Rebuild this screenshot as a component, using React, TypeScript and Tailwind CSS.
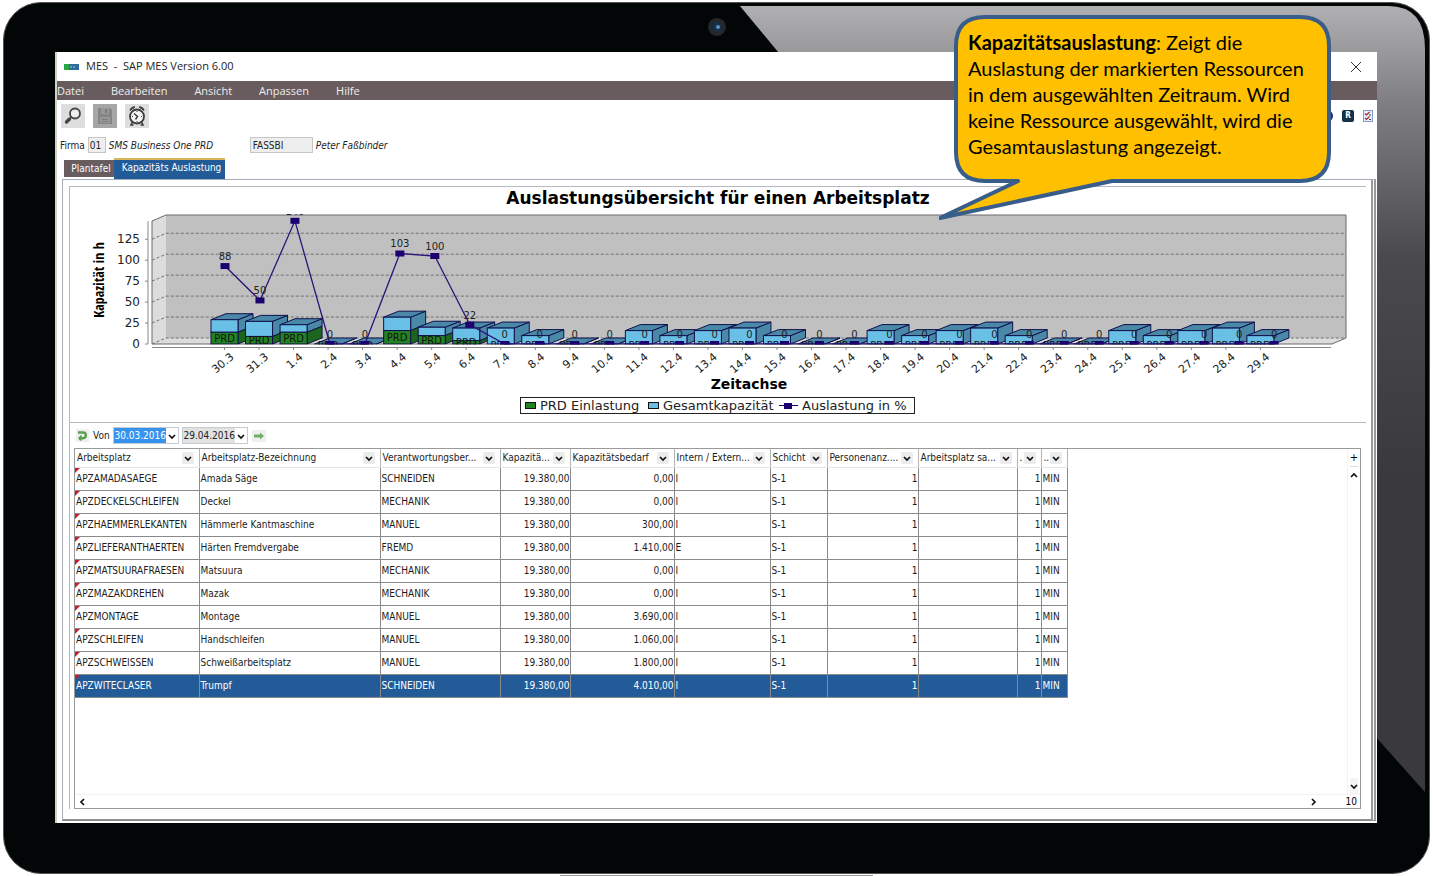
import { useState } from 'react';

interface Column {
  title: string;
  width: string;
  align?: 'right';
}

const columns: Column[] = [
  { title: 'Arbeitsplatz', width: 'w-[124px]' },
  { title: 'Arbeitsplatz-Bezeichnung', width: 'w-[181px]' },
  { title: 'Verantwortungsber...', width: 'w-[120px]' },
  { title: 'Kapazitä...', width: 'w-[70px]', align: 'right' },
  { title: 'Kapazitätsbedarf', width: 'w-[104px]', align: 'right' },
  { title: 'Intern / Extern...', width: 'w-[96px]' },
  { title: 'Schicht', width: 'w-[57px]' },
  { title: 'Personenanz....', width: 'w-[91px]', align: 'right' },
  { title: 'Arbeitsplatz sa...', width: 'w-[99px]' },
  { title: '.', width: 'w-[24px]', align: 'right' },
  { title: '..', width: 'w-[26px]' },
];

const rows = [
  ['APZAMADASAEGE', 'Amada Säge', 'SCHNEIDEN', '0,00', 'I'],
  ['APZDECKELSCHLEIFEN', 'Deckel', 'MECHANIK', '0,00', 'I'],
  ['APZHAEMMERLEKANTEN', 'Hämmerle Kantmaschine', 'MANUEL', '300,00', 'I'],
  ['APZLIEFERANTHAERTEN', 'Härten Fremdvergabe', 'FREMD', '1.410,00', 'E'],
  ['APZMATSUURAFRAESEN', 'Matsuura', 'MECHANIK', '0,00', 'I'],
  ['APZMAZAKDREHEN', 'Mazak', 'MECHANIK', '0,00', 'I'],
  ['APZMONTAGE', 'Montage', 'MANUEL', '3.690,00', 'I'],
  ['APZSCHLEIFEN', 'Handschleifen', 'MANUEL', '1.060,00', 'I'],
  ['APZSCHWEISSEN', 'Schweißarbeitsplatz', 'MANUEL', '1.800,00', 'I'],
  ['APZWITECLASER', 'Trumpf', 'SCHNEIDEN', '4.010,00', 'I'],
].map(([id, name, area, demand, kind]) => [
  id, name, area, '19.380,00', demand, kind, 'S-1', '1', '', '1', 'MIN',
]);

interface Day {
  label: string;
  used: number;
  total: number;
  load: number;
}

const days: Day[] = [
  { label: '30.3', used: 14, total: 29, load: 93 },
  { label: '31.3', used: 9, total: 27, load: 52 },
  { label: '1.4', used: 14, total: 23, load: 147 },
  { label: '2.4', used: 0, total: 0, load: 0 },
  { label: '3.4', used: 0, total: 0, load: 0 },
  { label: '4.4', used: 16, total: 32, load: 108 },
  { label: '5.4', used: 10, total: 20, load: 105 },
  { label: '6.4', used: 4, total: 19, load: 23 },
  { label: '7.4', used: 0, total: 19, load: 0 },
  { label: '8.4', used: 0, total: 10, load: 0 },
  { label: '9.4', used: 0, total: 0, load: 0 },
  { label: '10.4', used: 0, total: 0, load: 0 },
  { label: '11.4', used: 0, total: 16, load: 0 },
  { label: '12.4', used: 0, total: 10, load: 0 },
  { label: '13.4', used: 0, total: 16, load: 0 },
  { label: '14.4', used: 0, total: 19, load: 0 },
  { label: '15.4', used: 0, total: 10, load: 0 },
  { label: '16.4', used: 0, total: 0, load: 0 },
  { label: '17.4', used: 0, total: 0, load: 0 },
  { label: '18.4', used: 0, total: 16, load: 0 },
  { label: '19.4', used: 0, total: 10, load: 0 },
  { label: '20.4', used: 0, total: 16, load: 0 },
  { label: '21.4', used: 0, total: 19, load: 0 },
  { label: '22.4', used: 0, total: 10, load: 0 },
  { label: '23.4', used: 0, total: 0, load: 0 },
  { label: '24.4', used: 0, total: 0, load: 0 },
  { label: '25.4', used: 0, total: 16, load: 0 },
  { label: '26.4', used: 0, total: 10, load: 0 },
  { label: '27.4', used: 0, total: 16, load: 0 },
  { label: '28.4', used: 0, total: 19, load: 0 },
  { label: '29.4', used: 0, total: 10, load: 0 },
];

const loadLabels: Record<string, string> = {
  '30.3': '88', '31.3': '50', '1.4': '140', '4.4': '103', '5.4': '100', '6.4': '22',
};

const BASE = 157;
const y = (value: number) => BASE - value * 0.838;
const barX = (i: number) => 154.5 + i * 34.53;
const pointX = (i: number) => 155 + i * 34.97;

const Bar = ({ day, x }: { day: Day; x: number }) => {
  const left = x - 13.5;
  const right = x + 13.5;
  const top = y(day.total);
  const mid = y(day.used);
  const side = (from: number, to: number) =>
    `${right},${from} ${right + 15},${from - 6} ${right + 15},${to - 6} ${right},${to}`;
  return (
    <g stroke="#10104c" strokeWidth="1">
      <polygon points={side(top, mid)} fill="#4a88a8" />
      {day.used > 0 && <polygon points={side(mid, BASE)} fill="#1b661b" />}
      <polygon
        points={`${left},${top} ${left + 15},${top - 6} ${right + 15},${top - 6} ${right},${top}`}
        fill="#4a88a8"
      />
      <rect x={left} y={top} width="27" height={mid - top} fill="#69bfe6" />
      {day.used > 0 && <rect x={left} y={mid} width="27" height={BASE - mid} fill="#228322" />}
      <text
        x={x}
        y={day.used > 0 ? (mid + BASE) / 2 + 4 : BASE + 5}
        textAnchor="middle"
        fontSize="10"
        fill="#111"
        stroke="none"
      >
        PRD
      </text>
    </g>
  );
};

const CapacityChart = () => (
  <svg
    viewBox="0 0 1296 235"
    className="block w-full font-['DejaVu_Sans',sans-serif]"
    role="img"
    aria-label="Auslastungsübersicht"
  >
    <defs>
      <clipPath id="plot">
        <rect x="82" y="27" width="1196" height="130.5" />
      </clipPath>
    </defs>
    <text x="648" y="17" textAnchor="middle" fontSize="17" fontWeight="bold">
      Auslastungsübersicht für einen Arbeitsplatz
    </text>
    <text
      x="34"
      y="93"
      textAnchor="middle"
      fontSize="14"
      fontWeight="bold"
      className="font-['Open_Sans_Condensed','DejaVu_Sans_Condensed',sans-serif]"
      transform="rotate(-90 34 93)"
    >
      Kapazität in h
    </text>

    {/* walls and floor */}
    <polygon points="82,34 96,28 96,151 82,157" fill="#dcdcdc" />
    <rect x="96" y="28" width="1180" height="123" fill="#c0c0c0" />
    <polygon points="82,157 96,151 1276,151 1262,157" fill="#dcdcdc" />
    <path d="M82 157V34L96 28H1276V151L1262 157H82" fill="none" stroke="#6b6b6b" />
    <path d="M78 34V157M82 160.5H1261" stroke="#888" />
    {[0, 25, 50, 75, 100, 125].map((v) => (
      <g key={v}>
        <path d={`M82 ${y(v)}L96 ${y(v) - 6}H1276`} fill="none" stroke="#707070" strokeDasharray="3 2" />
        <path d={`M75 ${y(v)}H78`} stroke="#888" />
        <text x="70" y={y(v) + 4} textAnchor="end" fontSize="12" fill="#222">
          {v}
        </text>
      </g>
    ))}

    <g clipPath="url(#plot)">
      {days.map((day, i) => (
        <Bar key={day.label} day={day} x={barX(i)} />
      ))}
      <polyline
        points={days.map((day, i) => `${pointX(i)},${y(day.load)}`).join(' ')}
        fill="none"
        stroke="#2a1478"
        strokeWidth="1.3"
      />
      {days.map((day, i) => (
        <g key={day.label}>
          <rect x={pointX(i) - 4.5} y={y(day.load) - 3} width="9" height="6" fill="#1c0070" />
          <text x={pointX(i)} y={y(day.load) - 6} textAnchor="middle" fontSize="10" fill="#222">
            {loadLabels[day.label] ?? '0'}
          </text>
        </g>
      ))}
    </g>

    {days.map((day, i) => (
      <g key={day.label}>
        <path d={`M${barX(i)} 160V163`} stroke="#888" />
        <text
          x={barX(i) + 10}
          y="171"
          textAnchor="end"
          fontSize="11"
          fill="#222"
          transform={`rotate(-40 ${barX(i) + 10} 171)`}
        >
          {day.label}
        </text>
      </g>
    ))}
    <text x="679" y="202" textAnchor="middle" fontSize="14" fontWeight="bold">
      Zeitachse
    </text>

    <rect x="450.5" y="210.5" width="394" height="16" fill="#fff" stroke="#222" />
    <g fontSize="13" fill="#222">
      <rect x="455.5" y="215.5" width="10" height="6" fill="#228322" stroke="#111" />
      <text x="470" y="223">PRD Einlastung</text>
      <rect x="578.5" y="215.5" width="10" height="6" fill="#69bfe6" stroke="#111" />
      <text x="593" y="223">Gesamtkapazität</text>
      <path d="M709 218.5H728" stroke="#1c0070" />
      <rect x="714" y="216" width="8" height="6" fill="#1c0070" />
      <text x="732" y="223">Auslastung in %</text>
    </g>
  </svg>
);

const Chevron = ({ d = 'M1 3L4 6L7 3' }: { d?: string }) => (
  <svg viewBox="0 0 8 8" className="size-2" fill="none" stroke="#111" strokeWidth="1.7">
    <path d={d} />
  </svg>
);

const Toolbar = () => (
  <div className="flex h-8 items-center justify-between px-1">
    <div className="flex gap-2">
      <button aria-label="Suchen" className="flex size-6 items-center justify-center bg-[#dedede]">
        <svg viewBox="0 0 24 24" className="size-6" fill="none" stroke="#444">
          <circle cx="14" cy="9.5" r="5" strokeWidth="1.8" fill="#eee" />
          <path d="M10.5 13L8.5 15" strokeWidth="1.5" />
          <path d="M8.5 15L5.5 18" strokeWidth="3.4" strokeLinecap="round" />
        </svg>
      </button>
      <button aria-label="Speichern" className="flex size-6 items-center justify-center bg-[#a6a6a6]">
        <svg viewBox="0 0 24 24" className="size-6">
          <path d="M5 4H17L19 6V20H5Z" fill="#858585" />
          <path d="M8 4H16V10H8Z M7 13H17V19H7Z" fill="#979797" />
          <path d="M12 5H14V9H12Z M9 15H15V16H9Z M9 17H15V18H9Z" fill="#7c7c7c" />
        </svg>
      </button>
      <button aria-label="Wecker" className="flex size-6 items-center justify-center bg-[#dedede]">
        <svg viewBox="0 0 24 24" className="size-6" fill="none" stroke="#3c3c3c">
          <circle cx="12" cy="12.5" r="7" strokeWidth="1.8" fill="#f4f4f4" />
          <path d="M5 6.5A4 4 0 0 1 10 3L5 6.5Z M19 6.5A4 4 0 0 0 14 3L19 6.5Z" fill="#3c3c3c" />
          <path d="M7.5 18L6 21H8.5M16.5 18L18 21H15.5" strokeWidth="1.6" />
          <path d="M9 9.5L12.5 12.5L10.5 15.5" strokeWidth="1.4" />
          <path d="M12 7V8M17 12.5H16M12 18V17M7 12.5H8" />
        </svg>
      </button>
    </div>
    <div className="flex items-center gap-[9px]">
      <button aria-label="Info" className="size-3 rounded-full bg-[#1226a8]" />
      <button className="flex h-3 w-3 items-center justify-center rounded-xs bg-[#12324a] text-[8px] leading-none font-bold text-white">
        R
      </button>
      <button aria-label="Checkliste">
        <svg viewBox="0 0 10 12" className="h-3 w-[10px]" fill="none">
          <rect x="0.5" y="0.5" width="9" height="11" fill="#e9eff8" stroke="#7f9dc6" />
          <path d="M2 3.5L3.5 5L6.5 2M2 8L3.5 9.5L6.5 6.5" stroke="#a82430" strokeWidth="1.2" />
          <path d="M6 5H8M6 9.5H8" stroke="#445" />
        </svg>
      </button>
    </div>
  </div>
);

const DateBox = ({ label, value, active }: { label: string; value: string; active?: boolean }) => (
  <div className="flex h-[17px] w-[66px] border border-[#c4ccd2] bg-white">
    <input
      aria-label={label}
      defaultValue={value}
      className={
        active
          ? 'w-[52px] bg-[#3592ee] text-right text-[10px] text-white'
          : 'w-[52px] bg-[#e2e2e2] text-right text-[10px] text-[#222]'
      }
    />
    <button aria-label={`${label} öffnen`} className="flex flex-1 items-center justify-center">
      <Chevron />
    </button>
  </div>
);

const ResourceTable = () => {
  const [selected, setSelected] = useState(9);

  return (
    <table className="w-[992px] table-fixed border-collapse self-start text-[10px] leading-3 text-[#1c1c1c]">
      <thead>
        <tr className="h-[18px]">
          {columns.map((col) => (
            <th key={col.title} className={`${col.width} border-r border-b border-[#b5b5b5] border-b-[#e4e4e4] p-0 font-normal`}>
              <div className="flex items-center justify-between overflow-hidden pr-[5px] pl-[2px] whitespace-nowrap">
                <span>{col.title}</span>
                <button
                  aria-label={`${col.title} filtern`}
                  className="flex size-3 shrink-0 items-center justify-center rounded-xs bg-[#ececec]"
                >
                  <Chevron />
                </button>
              </div>
            </th>
          ))}
        </tr>
      </thead>
      <tbody>
        {rows.map((row, r) => (
          <tr
            key={row[0]}
            onClick={() => setSelected(r)}
            className={r === selected ? 'h-[23px] bg-[#225b98] text-white' : 'h-[23px]'}
          >
            {row.map((cell, c) => (
              <td
                key={c}
                className={
                  columns[c].align === 'right'
                    ? 'border-r border-b border-[#8a8a8a] p-0 text-right'
                    : 'relative border-r border-b border-[#8a8a8a] p-0 pl-px'
                }
              >
                {c === 0 && (
                  <svg viewBox="0 0 5 5" className="absolute top-0 left-0 size-[5px]">
                    <path d="M0 0H5L0 5Z" fill="#c81e32" />
                  </svg>
                )}
                {cell}
              </td>
            ))}
          </tr>
        ))}
      </tbody>
    </table>
  );
};

const ResourceGrid = () => (
  <div className="ml-1 mr-[5px] flex h-[361px] flex-col border border-[#9a9a9a]">
    <div className="flex flex-1 justify-between">
      <ResourceTable />
      <div className="flex w-[13px] flex-col items-center justify-between border-l border-[#f2f2f2]">
        <div className="flex flex-col">
          <button className="h-[18px] border-b border-[#ddd] text-[11px] leading-[18px]">+</button>
          <button aria-label="Nach oben" className="flex h-4 items-center justify-center">
            <Chevron d="M1 6L4 3L7 6" />
          </button>
        </div>
        <button aria-label="Nach unten" className="flex h-4 items-center justify-center bg-[#f4f4f4]">
          <Chevron />
        </button>
      </div>
    </div>
    <div className="flex h-[14px] items-center justify-between border-t border-[#f2f2f2] pr-[3px] pl-[3px]">
      <button aria-label="Nach links">
        <Chevron d="M6 1L3 4L6 7" />
      </button>
      <div className="flex items-center gap-7">
        <button aria-label="Nach rechts">
          <Chevron d="M2 1L5 4L2 7" />
        </button>
        <span className="text-[10px] leading-3">10</span>
      </div>
    </div>
  </div>
);

const Callout = () => (
  <aside className="absolute top-[14px] right-[100px] h-[208px] w-[394px] font-['Lato',sans-serif]">
    <svg viewBox="0 0 394 208" className="absolute inset-0 size-full">
      <path
        d="M46 3H361Q390 3 390 32V138Q390 167 361 167H173L1 204L79 167H46Q17 167 17 138V32Q17 3 46 3Z"
        fill="#ffc000"
        stroke="#385d8a"
        strokeWidth="4"
        strokeLinejoin="round"
      />
    </svg>
    <p className="relative pt-[15px] pl-[29px] text-[20px] leading-[26px] whitespace-nowrap text-black">
      <b>Kapazitätsauslastung</b>: Zeigt die
      <br />
      Auslastung der markierten Ressourcen
      <br />
      in dem ausgewählten Zeitraum. Wird
      <br />
      keine Ressource ausgewählt, wird die
      <br />
      Gesamtauslastung angezeigt.
    </p>
  </aside>
);

const Gloss = () => (
  <svg viewBox="0 0 1427 871" preserveAspectRatio="none" className="absolute inset-0 size-full">
    <defs>
      <linearGradient id="gloss" x1="0" y1="0" x2="0" y2="1">
        <stop offset="0" stopColor="#b0b0b3" />
        <stop offset="0.12" stopColor="#808083" />
        <stop offset="0.32" stopColor="#4a4a4c" />
        <stop offset="0.6" stopColor="#3a3a3c" />
      </linearGradient>
    </defs>
    <path d="M737 3H1386Q1423 3 1423 46V790L1374 735V50H776Z" fill="url(#gloss)" />
    <circle cx="714" cy="24" r="9" fill="#25272b" />
    <circle cx="714" cy="24" r="5" fill="#17304a" />
    <circle cx="715" cy="24" r="2" fill="#5f92bd" />
  </svg>
);

export default function App() {
  return (
    <div className="relative bg-white px-[3px] pt-[2px] font-['DejaVu_Sans_Condensed','DejaVu_Sans',sans-serif]">
      <div className="relative overflow-hidden rounded-[38px] border border-[#555] bg-[#030606] pt-[49px] pr-[52px] pb-[50px] pl-[51px]">
        <Gloss />
        <main className="relative border-l-2 border-[#cfd3c4] bg-white pb-[2px]">
          <header className="flex h-[29px] items-center justify-between pr-4 pl-[7px] font-['Open_Sans',sans-serif] text-[#222]">
            <div className="flex items-center gap-[7px]">
              <svg viewBox="0 0 15 6" className="h-[6px] w-[15px]">
                <path d="M0 0H5V6H0Z" fill="#28a745" />
                <path d="M5 0H15V6H5Z" fill="#2f6c9c" />
                <path d="M6 3H12" stroke="#a8cbe4" strokeDasharray="2 1" />
              </svg>
              <h1 className="text-[11px] whitespace-pre">MES  -  SAP MES Version 6.00</h1>
            </div>
            <button aria-label="Schließen">
              <svg viewBox="0 0 10 10" className="size-[10px]" stroke="#333">
                <path d="M0 0L10 10M10 0L0 10" />
              </svg>
            </button>
          </header>
          <nav className="flex h-[19px] items-center gap-[27px] bg-[#685c5f] font-['Open_Sans',sans-serif] text-[11px] leading-none text-[#eee]">
            <button>Datei</button>
            <button>Bearbeiten</button>
            <button>Ansicht</button>
            <button>Anpassen</button>
            <button>Hilfe</button>
          </nav>
          <Toolbar />
          <div className="flex h-[26px] items-center gap-[3px] pl-[3px] text-[10px] text-[#222]">
            <label htmlFor="firma">Firma</label>
            <input id="firma" defaultValue="01" className="h-4 w-[18px] border border-[#c6c6c6] bg-[#eee] pl-px" />
            <i className="w-[138px] whitespace-nowrap">SMS Business One PRD</i>
            <input
              aria-label="Benutzer"
              defaultValue="FASSBI"
              className="h-4 w-[63px] border border-[#c6c6c6] bg-[#eee] pl-[2px]"
            />
            <i>Peter Faßbinder</i>
          </div>
          <div className="flex h-[21px] items-end pl-[7px] text-[10px] text-white">
            <button className="mb-[2px] h-[17px] w-[50px] bg-[#685c5f] pl-1">Plantafel</button>
            <button className="h-[21px] w-[111px] border-t-2 border-[#d6b75c] bg-[#225b98] pb-1 pl-1">
              Kapazitäts Auslastung
            </button>
          </div>
          <section className="mr-px ml-[5px] border-t border-r-[5px] border-b-2 border-l border-[#a4acb8] border-r-[#999] border-b-[#8e8e8e] pt-[6px] pr-[5px] pb-[10px] pl-[6px] [border-right-style:double]">
            <div className="border-t border-l border-[#b4b8c0]">
              <CapacityChart />
              <div className="flex h-[26px] items-center border-t border-[#b4b8c0] pl-[6px] text-[10px] text-[#222]">
                <button aria-label="Zurück" className="bg-[#efefef]">
                  <svg viewBox="0 0 13 13" className="size-[13px]" fill="none" stroke="#5aa052" strokeWidth="2.4">
                    <path d="M2 3.5H7A2.8 2.8 0 0 1 7 9.2H3" />
                    <path d="M5.5 6.5L3 9.2L5.5 11.5" strokeWidth="1.6" />
                  </svg>
                </button>
                <span className="w-6 pl-1">Von</span>
                <DateBox label="Von" value="30.03.2016" active />
                <span className="w-[3px]" />
                <DateBox label="Bis" value="29.04.2016" />
                <button aria-label="Weiter" className="ml-1 bg-[#efefef]">
                  <svg viewBox="0 0 14 12" className="h-3 w-[14px]">
                    <path d="M2 4.5H8V2.5L12 6L8 9.5V7.5H2Z" fill="#6fb164" />
                  </svg>
                </button>
              </div>
              <ResourceGrid />
            </div>
          </section>
        </main>
      </div>
      <div className="mx-auto mt-px h-px w-[313px] bg-[#999]" />
      <Callout />
    </div>
  );
}
